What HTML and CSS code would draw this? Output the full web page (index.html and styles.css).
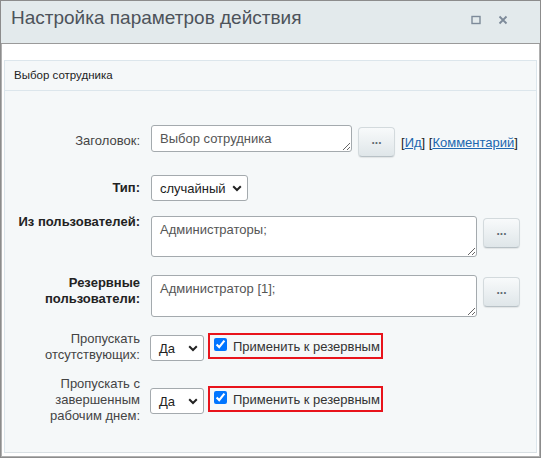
FILE: index.html
```html
<!DOCTYPE html>
<html lang="ru">
<head>
<meta charset="utf-8">
<title>Настройка параметров действия</title>
<link rel="stylesheet" href="styles.css">
</head>
<body>
<div class="window">
  <div class="win-head">
    <div class="win-title">Настройка параметров действия</div>
    <div class="win-icons">
      <svg class="ico" width="10" height="10" viewBox="0 0 10 10"><rect x="1" y="1.5" width="8" height="7" fill="none" stroke="#7d8a99" stroke-width="1.4"/></svg>
      <svg class="ico" width="10" height="10" viewBox="0 0 10 10"><path d="M1.5 1.5 L8.5 8.5 M8.5 1.5 L1.5 8.5" stroke="#7d8a99" stroke-width="1.8"/></svg>
    </div>
  </div>
  <div class="win-body">
    <div class="panel">
      <div class="panel-head">Выбор сотрудника</div>
      <div class="panel-body">
        <div class="row row-title">
          <div class="label">Заголовок:</div>
          <div class="field">
            <textarea class="ta ta-title">Выбор сотрудника</textarea>
            <button class="dots dots-title">...</button>
            <span class="links">[<a href="#">Ид</a>] [<a href="#">Комментарий</a>]</span>
          </div>
        </div>
        <div class="row row-type">
          <div class="label bold">Тип:</div>
          <div class="field">
            <div class="sel sel-type"><span>случайный</span><svg width="10" height="7" viewBox="0 0 10 7"><path d="M1.2 1.3 L5 5 L8.8 1.3" fill="none" stroke="#222" stroke-width="2"/></svg></div>
          </div>
        </div>
        <div class="row row-users">
          <div class="label bold">Из пользователей:</div>
          <div class="field">
            <textarea class="ta ta-big">Администраторы;</textarea>
            <button class="dots">...</button>
          </div>
        </div>
        <div class="row row-reserve">
          <div class="label bold">Резервные<br>пользователи:</div>
          <div class="field">
            <textarea class="ta ta-big ta-res">Администратор [1];</textarea>
            <button class="dots">...</button>
          </div>
        </div>
        <div class="row row-skip">
          <div class="label">Пропускать<br>отсутствующих:</div>
          <div class="field">
            <div class="sel sel-yes"><span>Да</span><svg width="10" height="7" viewBox="0 0 10 7"><path d="M1.2 1.3 L5 5 L8.8 1.3" fill="none" stroke="#222" stroke-width="2"/></svg></div>
            <label class="apply"><input type="checkbox" checked> Применить к резервным</label>
          </div>
        </div>
        <div class="row row-skip2">
          <div class="label">Пропускать с<br>завершенным<br>рабочим днем:</div>
          <div class="field">
            <div class="sel sel-yes"><span>Да</span><svg width="10" height="7" viewBox="0 0 10 7"><path d="M1.2 1.3 L5 5 L8.8 1.3" fill="none" stroke="#222" stroke-width="2"/></svg></div>
            <label class="apply"><input type="checkbox" checked> Применить к резервным</label>
          </div>
        </div>
      </div>
    </div>
  </div>
</div>
</body>
</html>
```
FILE: styles.css
```css
* { box-sizing: border-box; }
html, body { margin: 0; padding: 0; background: #fff; }
body { font-family: "Liberation Sans", Arial, sans-serif; font-size: 13px; color: #333; }

.window {
  width: 541px;
  height: 458px;
  border: 1px solid #8c8c8c;
  box-shadow: inset 1px 0 0 #b0b0b0, inset -1px 0 0 #b0b0b0, inset 0 -1px 0 #b0b0b0;
  display: flex;
  flex-direction: column;
  background: #fff;
}
.win-head {
  height: 43px;
  flex: none;
  background: #e3eaec;
  border-bottom: 1px solid #9a9a9a;
  display: flex;
  align-items: center;
  padding: 0 0 0 10px;
}
.win-title {
  font-size: 19px;
  color: #4d535a;
  flex: 1;
  margin-top: -8px;
}
.win-icons {
  display: flex;
  gap: 17px;
  padding-right: 32px;
  margin-top: -4px;
}
.ico { display: block; }

.win-body {
  flex: 1;
  padding: 16px 3px 4px 3px;
  display: flex;
}
.panel {
  flex: 1;
  border: 1px solid #dce6ec;
  border-bottom-color: #d8dfe3;
  background: #f5f8f9;
  display: flex;
  flex-direction: column;
}
.panel-head {
  height: 30px;
  flex: none;
  border-bottom: 1px solid #dce6ec;
  padding: 0 0 0 9px;
  line-height: 29px;
  font-size: 11.5px;
  color: #222;
}
.panel-body {
  padding-top: 34px;
}

.row {
  display: flex;
  gap: 10px;
}
.label {
  width: 135px;
  flex: none;
  text-align: right;
  line-height: 16px;
  color: #444;
}
.label.bold { font-weight: bold; color: #222; }
.field {
  display: flex;
  align-items: flex-start;
}

.ta {
  display: block;
  margin: 0;
  font-family: "Liberation Sans", Arial, sans-serif;
  font-size: 13px;
  color: #555;
  background: #fff;
  border: 1px solid #a4aaae;
  border-radius: 3px;
  padding: 5px 8px;
  outline: none;
}
.ta-title { width: 201px; height: 27px; margin-left: 1px; }
.ta-big { width: 326px; height: 41px; margin-left: 1px; }
.ta-res { height: 42px; }

.dots {
  margin: 2px 0 0 6px;
  width: 37px;
  height: 30px;
  border: 1px solid #d3dadd;
  border-bottom-color: #b8c1c6;
  border-radius: 4px;
  background: linear-gradient(#f8fafb, #dfe6e9);
  color: #5f6a72;
  font-family: "Liberation Sans", Arial, sans-serif;
  font-size: 12px;
  font-weight: bold;
  padding: 0 0 4px 0;
  box-shadow: 0 1px 1px rgba(0,0,0,0.08);
}
.links {
  margin: 10px 0 0 6px;
  color: #222;
  font-size: 13px;
}
.links a { color: #2067b0; text-decoration: underline; }

.sel {
  display: flex;
  align-items: center;
  justify-content: space-between;
  height: 26px;
  background: #fff;
  border: 1px solid #a4aaae;
  border-radius: 3px;
  padding: 0 5px 0 8px;
  color: #222;
  font-size: 13px;
}
.sel-type { width: 97px; margin-left: 1px; }
.sel-yes { width: 54px; }

.row-title { margin-top: 0; height: 32px; align-items: center; }
.row-title .field { align-self: flex-start; }
.row-type { margin-top: 18px; align-items: center; }
.row-users { margin-top: 15px; }
.row-users .label { margin-top: -2px; }
.row-reserve { margin-top: 18px; }
.row-skip { margin-top: 14px; align-items: center; }
.row-skip .sel { margin-top: 2px; }
.row-skip2 { margin-top: 13px; align-items: center; }
.row-skip2 .sel { margin-top: 2px; }

.apply {
  display: flex;
  align-items: center;
  margin-left: 4px;
  height: 26px;
  border: 2px solid #e8141c;
  padding: 0 1px 0 3px;
  color: #333;
  font-size: 13px;
  white-space: nowrap;
}
.apply input {
  margin: 0 6px 3px 1px;
  width: 13px;
  height: 13px;
}
```
